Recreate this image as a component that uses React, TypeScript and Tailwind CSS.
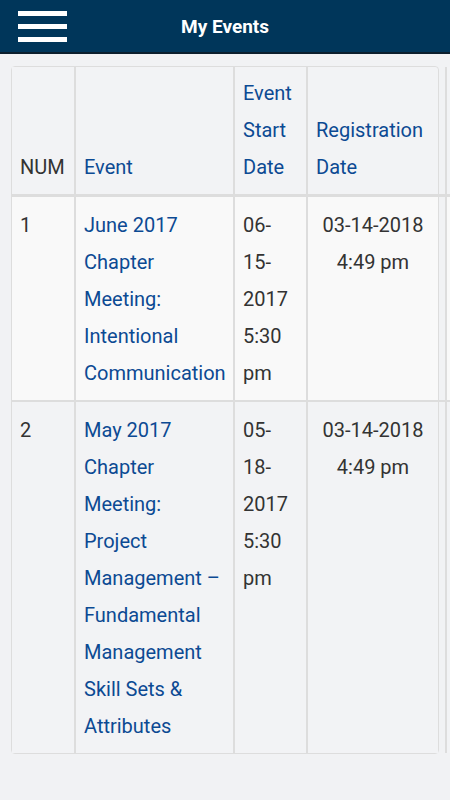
const events = [
  {
    num: "1",
    title: "June 2017 Chapter Meeting: Intentional Communication",
    start: ["06-", "15-", "2017", "5:30", "pm"],
    registered: ["03-14-2018", "4:49 pm"],
  },
  {
    num: "2",
    title:
      "May 2017 Chapter Meeting: Project Management – Fundamental Management Skill Sets & Attributes",
    start: ["05-", "18-", "2017", "5:30", "pm"],
    registered: ["03-14-2018", "4:49 pm"],
  },
];

export default function App() {
  return (
    <div
      className="min-h-screen overflow-hidden bg-[#f1f2f4] text-[20px] leading-[37px] text-[#333]"
      style={{ fontFamily: "Roboto, 'Liberation Sans', sans-serif" }}
    >
      <header className="grid h-[54px] grid-cols-[1fr_auto_1fr] items-center border-b-2 border-[#0c1f2e] bg-[#00365a]">
        <div className="flex flex-col gap-[8px] pl-[18px] pt-[1px]">
          <span className="block h-[5px] w-[49px] bg-white" />
          <span className="block h-[5px] w-[49px] bg-white" />
          <span className="block h-[5px] w-[49px] bg-white" />
        </div>
        <h1 className="text-[19px] font-bold leading-none text-white">My Events</h1>
        <div />
      </header>

      <div className="px-[11px] pt-[12px]">
        <div className="w-[428px] rounded-[4px] border border-[#dddddd]">
          {/* header row */}
          <div className="flex w-[459px] border-b-[3px] border-[#dddddd]">
            <div className="flex w-[64px] shrink-0 items-end border-r-2 border-[#dddddd] bg-[#f2f3f5] p-2">
              NUM
            </div>
            <div className="flex w-[159px] shrink-0 items-end border-r-2 border-[#dddddd] bg-[#f2f3f5] p-2 text-[#0c4a93]">
              Event
            </div>
            <div className="w-[73px] shrink-0 border-r-2 border-[#dddddd] bg-[#f2f3f5] p-2 text-[#0c4a93]">
              Event Start Date
            </div>
            <div className="flex w-[130px] shrink-0 items-end rounded-tr-[4px] bg-[#f2f3f5] p-2 text-[#0c4a93]">
              <span>
                Registration
                <br />
                Date
              </span>
            </div>
            <div className="ml-[7px] w-[26px] shrink-0 border-l-2 border-[#dddddd] bg-[#f2f3f5]" />
          </div>

          {events.map((ev, i) => {
            const bg = i === 0 ? "bg-[#f9f9f9]" : "bg-[#f2f3f5]";
            return (
              <div
                key={ev.num}
                className={`flex w-[459px] ${i === 0 ? "border-b-2 border-[#dddddd]" : ""}`}
              >
                <div className={`w-[64px] shrink-0 border-r-2 border-[#dddddd] px-2 pt-[10px] pb-2 ${bg}`}>
                  {ev.num}
                </div>
                <div
                  className={`w-[159px] shrink-0 border-r-2 border-[#dddddd] px-2 pt-[10px] pb-2 text-[#0c4a93] ${bg}`}
                >
                  {ev.title}
                </div>
                <div className={`w-[73px] shrink-0 border-r-2 border-[#dddddd] px-2 pt-[10px] pb-2 ${bg}`}>
                  {ev.start.map((s) => (
                    <div key={s}>{s}</div>
                  ))}
                </div>
                <div className={`w-[130px] shrink-0 px-2 pt-[10px] pb-2 text-center ${bg}`}>
                  {ev.registered.map((s) => (
                    <div key={s}>{s}</div>
                  ))}
                </div>
                <div className={`ml-[7px] w-[26px] shrink-0 border-l-2 border-[#dddddd] ${bg}`} />
              </div>
            );
          })}
        </div>
      </div>
    </div>
  );
}
